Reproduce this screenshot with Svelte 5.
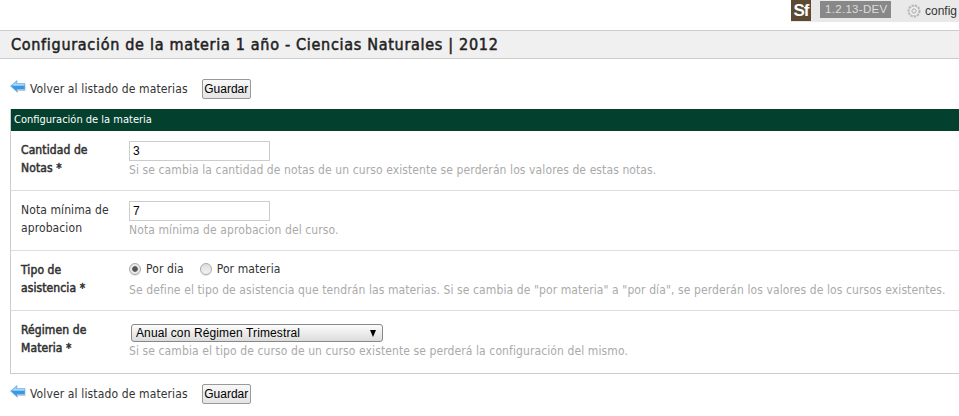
<script>
  const rows = [
    { label: ['Cantidad de', 'Notas *'], bold: true, kind: 'input', value: '3', help: 'Si se cambia la cantidad de notas de un curso existente se perderán los valores de estas notas.' },
    { label: ['Nota mínima de', 'aprobacion'], bold: false, kind: 'input', value: '7', help: 'Nota mínima de aprobacion del curso.' },
    { label: ['Tipo de', 'asistencia *'], bold: true, kind: 'radio', help: 'Se define el tipo de asistencia que tendrán las materias. Si se cambia de "por materia" a "por día", se perderán los valores de los cursos existentes.' },
    { label: ['Régimen de', 'Materia *'], bold: true, kind: 'select', help: 'Si se cambia el tipo de curso de un curso existente se perderá la configuración del mismo.' }
  ];
</script>

{#snippet actions()}
  <div class="actions">
    <svg class="arrow" width="16" height="14" viewBox="0 0 16 14">
      <path d="M7 .5 L.5 6 L7 12 V9.5 H15 V3.5 H7 Z" fill="#3a97e2" stroke="#7fbdec" stroke-width="0.7"/>
      <path d="M6.6 1.6 L1.6 5.8 H14.6 V4 H6.6 Z" fill="#a5d8f8"/>
      <path d="M7.5 12.6 V10.3 H15.5" fill="none" stroke="#bbb" stroke-width="1"/>
    </svg>
    <a class="back" href="#top">Volver al listado de materias</a>
    <button class="save">Guardar</button>
  </div>
{/snippet}

<div class="page">
  <div class="debug">
    <div class="sf">Sf</div>
    <div class="ver">1.2.13-DEV</div>
    <svg class="gear" width="16" height="16" viewBox="0 0 16 16">
      <circle cx="8" cy="8" r="5.4" fill="#f4f4f4" stroke="#b5b5b5" stroke-width="2.2" stroke-dasharray="2.2 1"/>
      <circle cx="8" cy="8" r="4.6" fill="#f4f4f4" stroke="#c4c4c4" stroke-width="0.8"/>
      <circle cx="8" cy="8" r="2.2" fill="#e9e9e9" stroke="#aaa" stroke-width="1"/>
    </svg>
    <span class="cfg">config</span>
  </div>

  <h1>Configuración de la materia 1 año - Ciencias Naturales | 2012</h1>

  {@render actions()}

  <div class="panel">
    <div class="head">Configuración de la materia</div>
    {#each rows as r}
      <div class="row">
        <div class="lab" class:bold={r.bold}>{r.label[0]}<br />{r.label[1]}</div>
        <div class="field">
          {#if r.kind === 'input'}
            <input type="text" value={r.value} />
          {:else if r.kind === 'radio'}
            <div class="radios">
              <input type="radio" name="a" checked /><span class="rl">Por dia</span>
              <input type="radio" name="a" /><span class="rl">Por materia</span>
            </div>
          {:else}
            <div class="selwrap">
              <select><option>Anual con Régimen Trimestral</option></select>
            </div>
          {/if}
          <div class="help">{r.help}</div>
        </div>
      </div>
    {/each}
  </div>

  {@render actions()}
</div>

<style>
  :global(body) { margin: 0; background: #fff; overflow: hidden; }
  .page { font-family: "DejaVu Sans", sans-serif; font-stretch: condensed; font-size: 12px; letter-spacing: .1px; color: #333; width: 959px; }
  .debug { height: 22px; display: flex; justify-content: flex-start; align-items: center; background: #e9e9e9; margin-left: 791px; overflow: hidden; font-family: "Liberation Sans", sans-serif; font-stretch: normal; font-size: 11px; letter-spacing: 0; color: #333; }
  .sf { flex: none; width: 20px; height: 21px; margin-bottom: 1px; background: #5c4a33; color: #fff; font-weight: bold; font-size: 17px; line-height: 21px; text-align: center; letter-spacing: -1px; margin-right: 9px; }
  .ver { flex: none; width: 61px; white-space: nowrap; background: #888; color: #ddd; font-size: 11.5px; height: 17px; line-height: 17px; padding: 0 5px; margin-right: 15px; margin-bottom: 3px; letter-spacing: 0.3px; }
  .gear { flex: none; margin-right: 3px; }
  .cfg { flex: none; font-size: 12px; white-space: nowrap; }
  h1 { margin: 8px 0 0; padding: 0 0 0 11px; height: 29px; line-height: 27px; box-sizing: border-box; background: #f0f0f0; border-top: 1px solid #ccc; border-bottom: 1px solid #ccc; font-size: 16px; font-weight: normal; -webkit-text-stroke: .5px #222; color: #222; letter-spacing: .7px; }
  .actions { display: flex; align-items: center; padding-left: 10px; height: 20px; margin-top: 20px; }
  .panel + .actions { margin-top: 10px; }
  .arrow { margin-bottom: 4px; }
  .back { color: #333; text-decoration: none; margin-left: 4px; letter-spacing: .13px; }
  .save { font-family: "Liberation Sans", sans-serif; font-stretch: normal; font-size: 12px; letter-spacing: 0; height: 20px; width: 49px; padding: 0; margin-left: 14px; border: 1px solid #999; border-radius: 2px; background: linear-gradient(#f8f8f8, #e4e4e4); color: #000; }
  .panel { margin: 10px 0 0 10px; border: 1px solid #ccc; border-top: 0; border-right: 0; }
  .head { background: #04402e; color: #fff; height: 22px; line-height: 22px; padding-left: 3px; font-size: 11px; letter-spacing: 0; }
  .row { display: flex; height: 59px; border-bottom: 1px solid #ddd; }
  .row:last-child { border-bottom: 0; height: 62px; }
  .lab { width: 108px; padding: 10px 0 0 10px; line-height: 18px; }
  .bold { -webkit-text-stroke: .5px #333; }
  .field { padding-top: 10px; }
  input[type=text] { display: block; width: 141px; height: 20px; box-sizing: border-box; border: 1px solid #ccc; padding: 0 3px; font-family: "Liberation Sans", sans-serif; font-stretch: normal; font-size: 12px; margin: 0; color: #000; }
  .help { color: #aaa; line-height: 18px; white-space: nowrap; }
  .radios { display: flex; align-items: flex-start; height: 20px; line-height: 16px; }
  .radios input { appearance: none; box-sizing: border-box; margin: 2px 5px 0 0; width: 12px; height: 12px; border-radius: 50%; border: 1px solid #aaa; background: linear-gradient(#dcdcdc, #f4f4f4); box-shadow: 0 1px 0 #e4e4e4; }
  .radios input:checked { background: radial-gradient(circle, #555 0, #555 2.4px, #e8e8e8 3.2px); }
  .rl { margin-right: 16px; }
  .selwrap { position: relative; width: 252px; height: 18px; margin: 3px 0 0 2px; }
  .selwrap::after { content: ""; position: absolute; right: 7px; top: 6px; border-left: 3.5px solid transparent; border-right: 3.5px solid transparent; border-top: 7px solid #000; }
  select { appearance: none; display: block; width: 252px; height: 18px; box-sizing: border-box; margin: 0; padding: 0 0 0 4px; border: 1px solid #888; border-radius: 3px; background: linear-gradient(#fcfcfc, #dcdcdc); font-family: "Liberation Sans", sans-serif; font-stretch: normal; font-size: 12px; letter-spacing: .12px; color: #000; }
</style>
